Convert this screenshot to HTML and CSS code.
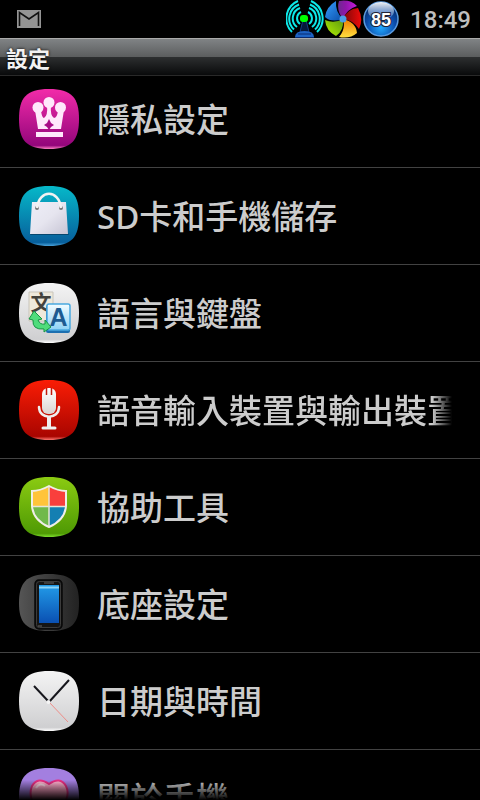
FILE: index.html
```html
<!DOCTYPE html>
<html lang="zh-Hant">

<head>
    <meta charset="UTF-8" />
    <meta name="viewport" content="width=device-width, initial-scale=1.0" />
    <title>設定</title>
    <link rel="stylesheet" href="styles.css">
</head>

<body>
    <div class="status-bar">
        <svg class="mail" viewBox="0 0 24 18" aria-label="Gmail">
            <rect width="24" height="18" fill="#949494" />
            <path d="M2.500 16V2.500L12 9l9.500-6.500V16" fill="none" stroke="#111" stroke-width="1.600" />
        </svg>
        <div class="status-icons">
            <!-- signal tower -->
            <svg viewBox="0 0 38 38">
                <g fill="none" stroke="#0de8e8" stroke-width="2">
                    <path d="M15 12a7 7 0 0 0-1 12M14 8a11 11 0 0 0-3 19M13 4.500a15 15 0 0 0-5 25M12 1a19 19 0 0 0-6 31" />
                    <path d="M22 12a7 7 0 0 1 1 12M23 8a11 11 0 0 1 3 19M24 4.500a15 15 0 0 1 5 25M25 1a19 19 0 0 1 6 31" />
                </g>
                <path d="M17 20l-3 12h9l-3-12z" fill="#06183a" stroke="#123c86" />
                <path d="M9 37q0-6 9.500-6t9.500 6z" fill="#1e63c4" />
                <path d="M12 34h13M9 37.500h19" stroke="#082a70" />
                <rect x="14" y="15" width="8" height="7" rx="3" fill="#0f0" />
            </svg>
            <!-- pinwheel -->
            <svg viewBox="0 0 38 38">
                <defs>
                    <linearGradient id="violet"><stop stop-color="#6d2a90" /><stop offset=".4" stop-color="#9016aa" /><stop offset="1" stop-color="#c51bdd" /></linearGradient>
                    <linearGradient id="crimson"><stop stop-color="#7a0808" /><stop offset="1" stop-color="#ee0a0a" /></linearGradient>
                    <linearGradient id="sun" x2="0" y2="1"><stop stop-color="#f07a00" /><stop offset="1" stop-color="#ffe040" /></linearGradient>
                    <linearGradient id="lime" x1="1" x2="0" y2="1"><stop stop-color="#5c9a10" /><stop offset="1" stop-color="#b4f000" /></linearGradient>
                    <linearGradient id="azure" x1="1" y1="1" x2="0" y2="0"><stop stop-color="#0b4ca8" /><stop offset="1" stop-color="#36a0ff" /></linearGradient>
                </defs>
                <path d="M19 19Q12 10 15 1q11-2 18 5-10 3-14 13z" fill="url(#violet)" />
                <path d="M19 19q4-10 15-11 6 11 1 21-6-9-16-10z" fill="url(#crimson)" />
                <path d="M19 19q13 3 14 14-7 6-18 4 7-8 4-18z" fill="url(#sun)" />
                <path d="M19 19q1 12-7 17Q2 31 1 20q9 4 18-1z" fill="url(#lime)" />
                <path d="M19 19Q7 23 1 17 2 7 12 1q-1 11 7 18z" fill="url(#azure)" />
                <circle cx="19" cy="19" r="3.500" fill="#4a9fe6" />
            </svg>
            <!-- battery ball -->
            <svg viewBox="0 0 38 38">
                <defs>
                    <radialGradient id="ball" cy=".75" r=".7"><stop stop-color="#22a8ff" /><stop offset=".6" stop-color="#0b4cab" /><stop offset="1" stop-color="#062a66" /></radialGradient>
                    <linearGradient id="shine" x2="0" y2="1"><stop stop-color="#fff" stop-opacity=".95" /><stop offset="1" stop-color="#8bb4ea" stop-opacity=".3" /></linearGradient>
                </defs>
                <circle cx="19" cy="19" r="17" fill="url(#ball)" stroke="#5b9be0" stroke-width="1.500" />
                <ellipse cx="19" cy="11" rx="13" ry="9" fill="url(#shine)" />
                <text class="ball-text" x="19" y="26" text-anchor="middle">85</text>
            </svg>
        </div>
        <time class="clock">18:49</time>
    </div>

    <header class="title-bar">
        <h1>設定</h1>
    </header>

    <main class="settings">
        <ul class="settings-list">
            <li>
                <a href="#">
                    <svg class="icon" viewBox="0 0 62 62">
                        <defs>
                            <linearGradient id="pink" x2="0" y2="1"><stop stop-color="#f22ba9" /><stop offset=".94" stop-color="#94067b" /><stop offset="1" stop-color="#ff82c4" /></linearGradient>
                        </defs>
                        <path d="M31 1C54 1 61 10 61 31S54 61 31 61 1 52 1 31 8 1 31 1z" fill="url(#pink)" />
                        <g fill="#ffe8fb">
                            <circle cx="31" cy="14.500" r="5.500" />
                            <circle cx="20" cy="19.500" r="5.500" />
                            <circle cx="42.500" cy="19.500" r="5.500" />
                            <path d="M17 22l6 1q1 7 3 7 4-2 3-13h4q-1 11 3 13 3 0 4-7l6-1-3 19H20z" />
                            <rect x="18" y="44" width="27" height="5" />
                        </g>
                        <path d="M31 31l2 4 3 2-3 2-2 3-2-3-3-2 3-2z" fill="#a80b86" />
                    </svg>
                    <span>隱私設定</span>
                </a>
            </li>
            <li>
                <a href="#">
                    <svg class="icon" viewBox="0 0 62 62">
                        <defs>
                            <linearGradient id="teal" x2="0" y2="1"><stop stop-color="#06b9c9" /><stop offset=".94" stop-color="#075f9c" /><stop offset="1" stop-color="#49a3dc" /></linearGradient>
                            <linearGradient id="bag" x2="1" y2="1"><stop stop-color="#eeeef8" /><stop offset=".5" stop-color="#e6e5ef" /><stop offset="1" stop-color="#c6c4d4" /></linearGradient>
                        </defs>
                        <path d="M31 1C54 1 61 10 61 31S54 61 31 61 1 52 1 31 8 1 31 1z" fill="url(#teal)" />
                        <path d="M12 50h39l-1-2H13z" fill="#06476f" />
                        <path d="M14 17h34l2 32H12z" fill="url(#bag)" />
                        <circle cx="19" cy="23" r="2" fill="#777" />
                        <circle cx="43" cy="23" r="2" fill="#777" />
                        <path d="M19 23C21 4 41 4 43 23" fill="none" stroke="#f2f2f2" stroke-width="2.500" />
                    </svg>
                    <span>SD卡和手機儲存</span>
                </a>
            </li>
            <li>
                <a href="#">
                    <svg class="icon" viewBox="0 0 62 62">
                        <defs>
                            <linearGradient id="silver" x2="0" y2="1"><stop stop-color="#f4f4f4" /><stop offset=".94" stop-color="#cfcfd1" /><stop offset="1" stop-color="#fff" /></linearGradient>
                            <linearGradient id="sky" x2="0" y2="1"><stop stop-color="#f3fcff" /><stop offset="1" stop-color="#8ed2f5" /></linearGradient>
                        </defs>
                        <path d="M31 1C54 1 61 10 61 31S54 61 31 61 1 52 1 31 8 1 31 1z" fill="url(#silver)" />
                        <path d="M11 10h24v29H11z" fill="#eee9db" stroke="#c9c5ba" />
                        <text class="glyph-wen" x="23" y="28" text-anchor="middle">文</text>
                        <rect x="28" y="23" width="24" height="28" rx="2" fill="#1c6fb0" />
                        <rect x="29" y="22" width="23" height="26" rx="2" fill="url(#sky)" stroke="#4aa9df" stroke-width="1.500" />
                        <text class="glyph-a" x="40.500" y="44" text-anchor="middle">A</text>
                        <path d="M16 29l8 8-4 1q2 5 7 4v-4l6 7-7 5v-3q-12 1-11-9l-4-1z" fill="#4fdc7b" stroke="#159443" />
                    </svg>
                    <span>語言與鍵盤</span>
                </a>
            </li>
            <li>
                <a href="#">
                    <svg class="icon" viewBox="0 0 62 62">
                        <defs>
                            <linearGradient id="red" x2="0" y2="1"><stop stop-color="#fa1d05" /><stop offset=".94" stop-color="#a90500" /><stop offset="1" stop-color="#ff7770" /></linearGradient>
                            <linearGradient id="mic" x2="0" y2="1"><stop stop-color="#fff" /><stop offset="1" stop-color="#dad4d2" /></linearGradient>
                        </defs>
                        <path d="M31 1C54 1 61 10 61 31S54 61 31 61 1 52 1 31 8 1 31 1z" fill="url(#red)" />
                        <rect x="24" y="9" width="14" height="26" rx="6" fill="url(#mic)" />
                        <path d="M28.500 9v7M33.500 9v7" stroke="#c11a0c" stroke-width="1.500" />
                        <path d="M21 28c0 13 20 13 20 0" fill="none" stroke="#eee" stroke-width="2.500" stroke-linecap="round" />
                        <path d="M31 38v10" stroke="#eee" stroke-width="4" />
                        <path d="M25 49h12" stroke="#eee" stroke-width="3" stroke-linecap="round" />
                    </svg>
                    <span class="faded">語音輸入裝置與輸出裝置</span>
                </a>
            </li>
            <li>
                <a href="#">
                    <svg class="icon" viewBox="0 0 62 62">
                        <defs>
                            <linearGradient id="green" x2="0" y2="1"><stop stop-color="#8bcb12" /><stop offset=".94" stop-color="#4f9a04" /><stop offset="1" stop-color="#7de02c" /></linearGradient>
                            <clipPath id="shield"><path d="M31 10q9 5 17 5v15q-1 14-17 21-16-7-17-21V15q8 0 17-5z" /></clipPath>
                        </defs>
                        <path d="M31 1C54 1 61 10 61 31S54 61 31 61 1 52 1 31 8 1 31 1z" fill="url(#green)" />
                        <g clip-path="url(#shield)">
                            <path d="M13 9h18v21H13z" fill="#ffc43a" />
                            <path d="M31 9h18v21H31z" fill="#f93f3c" />
                            <path d="M13 30h18v23H13z" fill="#70b94b" />
                            <path d="M31 30h18v23H31z" fill="#147fb2" />
                        </g>
                        <path d="M31 10v41M14 30.500h34" stroke="#e5e5d8" stroke-width="1.500" />
                        <path d="M31 10q9 5 17 5v15q-1 14-17 21-16-7-17-21V15q8 0 17-5z" fill="none" stroke="#f0eee8" stroke-width="2" />
                    </svg>
                    <span>協助工具</span>
                </a>
            </li>
            <li>
                <a href="#">
                    <svg class="icon" viewBox="0 0 62 62">
                        <defs>
                            <linearGradient id="dark"><stop stop-color="#555" /><stop offset=".5" stop-color="#3b3b3b" /><stop offset="1" stop-color="#222" /></linearGradient>
                            <linearGradient id="screen" x2="0" y2="1"><stop stop-color="#229be8" /><stop offset="1" stop-color="#0a50b2" /></linearGradient>
                        </defs>
                        <path d="M31 1C54 1 61 9 61 30S54 58 31 58 1 50 1 30 8 1 31 1z" fill="url(#dark)" />
                        <rect x="17" y="7" width="27" height="49" rx="4" fill="#151515" stroke="#080808" stroke-width="1.500" />
                        <rect x="18.500" y="8.500" width="24" height="46" rx="3" fill="none" stroke="#3c3c3c" />
                        <rect x="21" y="12" width="20" height="38" fill="url(#screen)" />
                        <path d="M21 14.500h20" stroke="#8bd3f6" stroke-width="2" />
                        <path d="M26 10h10M20 53h4" stroke="#666" />
                    </svg>
                    <span>底座設定</span>
                </a>
            </li>
            <li>
                <a href="#">
                    <svg class="icon" viewBox="0 0 62 62">
                        <path d="M31 1C54 1 61 10 61 31S54 61 31 61 1 52 1 31 8 1 31 1z" fill="url(#silver)" />
                        <path d="M31 32l19 20" stroke="#ee8d88" />
                        <path d="M31 32L16 16M31 32l20-22" stroke="#17171d" stroke-width="2" />
                        <circle cx="30.500" cy="32" r="2" fill="#f5f5f5" />
                    </svg>
                    <span>日期與時間</span>
                </a>
            </li>
            <li>
                <a href="#">
                    <svg class="icon" viewBox="0 0 62 62">
                        <defs>
                            <linearGradient id="heart" x2="0" y2="1"><stop stop-color="#ffb3cf" /><stop offset="1" stop-color="#f06a9f" /></linearGradient>
                        </defs>
                        <path d="M31 1C54 1 61 10 61 31S54 61 31 61 1 52 1 31 8 1 31 1z" fill="#a37fe0" />
                        <path d="M31 50C8 36 12 24 14 19q6-10 17-2 11-8 17 2c3 6 4 18-17 31z" fill="url(#heart)" stroke="#e82f83" stroke-width="2" />
                        <path d="M18 21q4-6 9-2" fill="none" stroke="#fff" stroke-opacity=".6" stroke-width="2" />
                    </svg>
                    <span>關於手機</span>
                </a>
            </li>
        </ul>
    </main>
</body>

</html>
```
FILE: styles.css
```css
* {
    box-sizing: border-box;
}

body {
    margin: 0;
    height: 100vh;
    display: flex;
    flex-direction: column;
    overflow: hidden;
    background: #000;
    color: #ccc;
    font-family: "Noto Sans", "Noto Sans CJK TC", sans-serif;
}

.status-bar {
    flex: none;
    display: flex;
    align-items: center;
    height: 38px;
    padding: 0 9px 0 17px;
}

.mail {
    width: 24px;
    height: 18px;
}

.status-icons {
    display: flex;
    margin-left: auto;
}

.status-icons svg {
    width: 38px;
    height: 38px;
}

.ball-text {
    font: bold 18px "Liberation Sans", sans-serif;
    fill: #fff;
    stroke: #223;
    stroke-width: 2px;
    paint-order: stroke;
}

.clock {
    margin-left: 10px;
    font-family: Roboto, sans-serif;
    font-size: 24px;
    font-weight: 500;
    line-height: 38px;
    padding-top: 2px;
    color: #bebebe;
}

.title-bar {
    flex: none;
    display: flex;
    align-items: center;
    height: 38px;
    padding: 2px 6px 0;
    border-top: 1px solid #aaa;
    border-bottom: 1px solid #292929;
    background: linear-gradient(#808385, #5b5d5e 50%, #2d2f30 50%, #090a0b);
}

.title-bar h1 {
    margin: 0;
    font-size: 22px;
    font-weight: bold;
    line-height: 34px;
    color: #f2f2f2;
    text-shadow: 0 0 3px #000;
}

.settings {
    position: relative;
    flex: 1;
    min-height: 0;
    overflow: hidden;
}

.settings::after {
    content: "";
    position: absolute;
    left: 0;
    right: 0;
    bottom: 0;
    height: 20px;
    background: linear-gradient(transparent, #000);
}

/* the list is scrolled a little under the title bar */
.settings-list {
    margin: -5px 0 0;
    padding: 0;
    list-style: none;
}

.settings-list li {
    border-bottom: 1px solid #424242;
}

.settings-list a {
    display: flex;
    align-items: center;
    gap: 17px;
    height: 96px;
    padding: 0 28px 0 18px;
    color: #ccc;
    text-decoration: none;
}

.icon {
    flex: none;
    width: 62px;
    height: 62px;
}

.settings-list span {
    flex: 1;
    min-width: 0;
    padding-top: 2px;
    overflow: hidden;
    white-space: nowrap;
    font-size: 33px;
    font-weight: 500;
    line-height: 48px;
}

.settings-list .faded {
    -webkit-mask-image: linear-gradient(to left, transparent, #000 20px);
    mask-image: linear-gradient(to left, transparent, #000 20px);
}

.glyph-wen {
    font: bold 21px "Noto Sans CJK TC", sans-serif;
    fill: #43423c;
}

.glyph-a {
    font: bold 25px "Liberation Sans", sans-serif;
    fill: #1d5b91;
}
```
